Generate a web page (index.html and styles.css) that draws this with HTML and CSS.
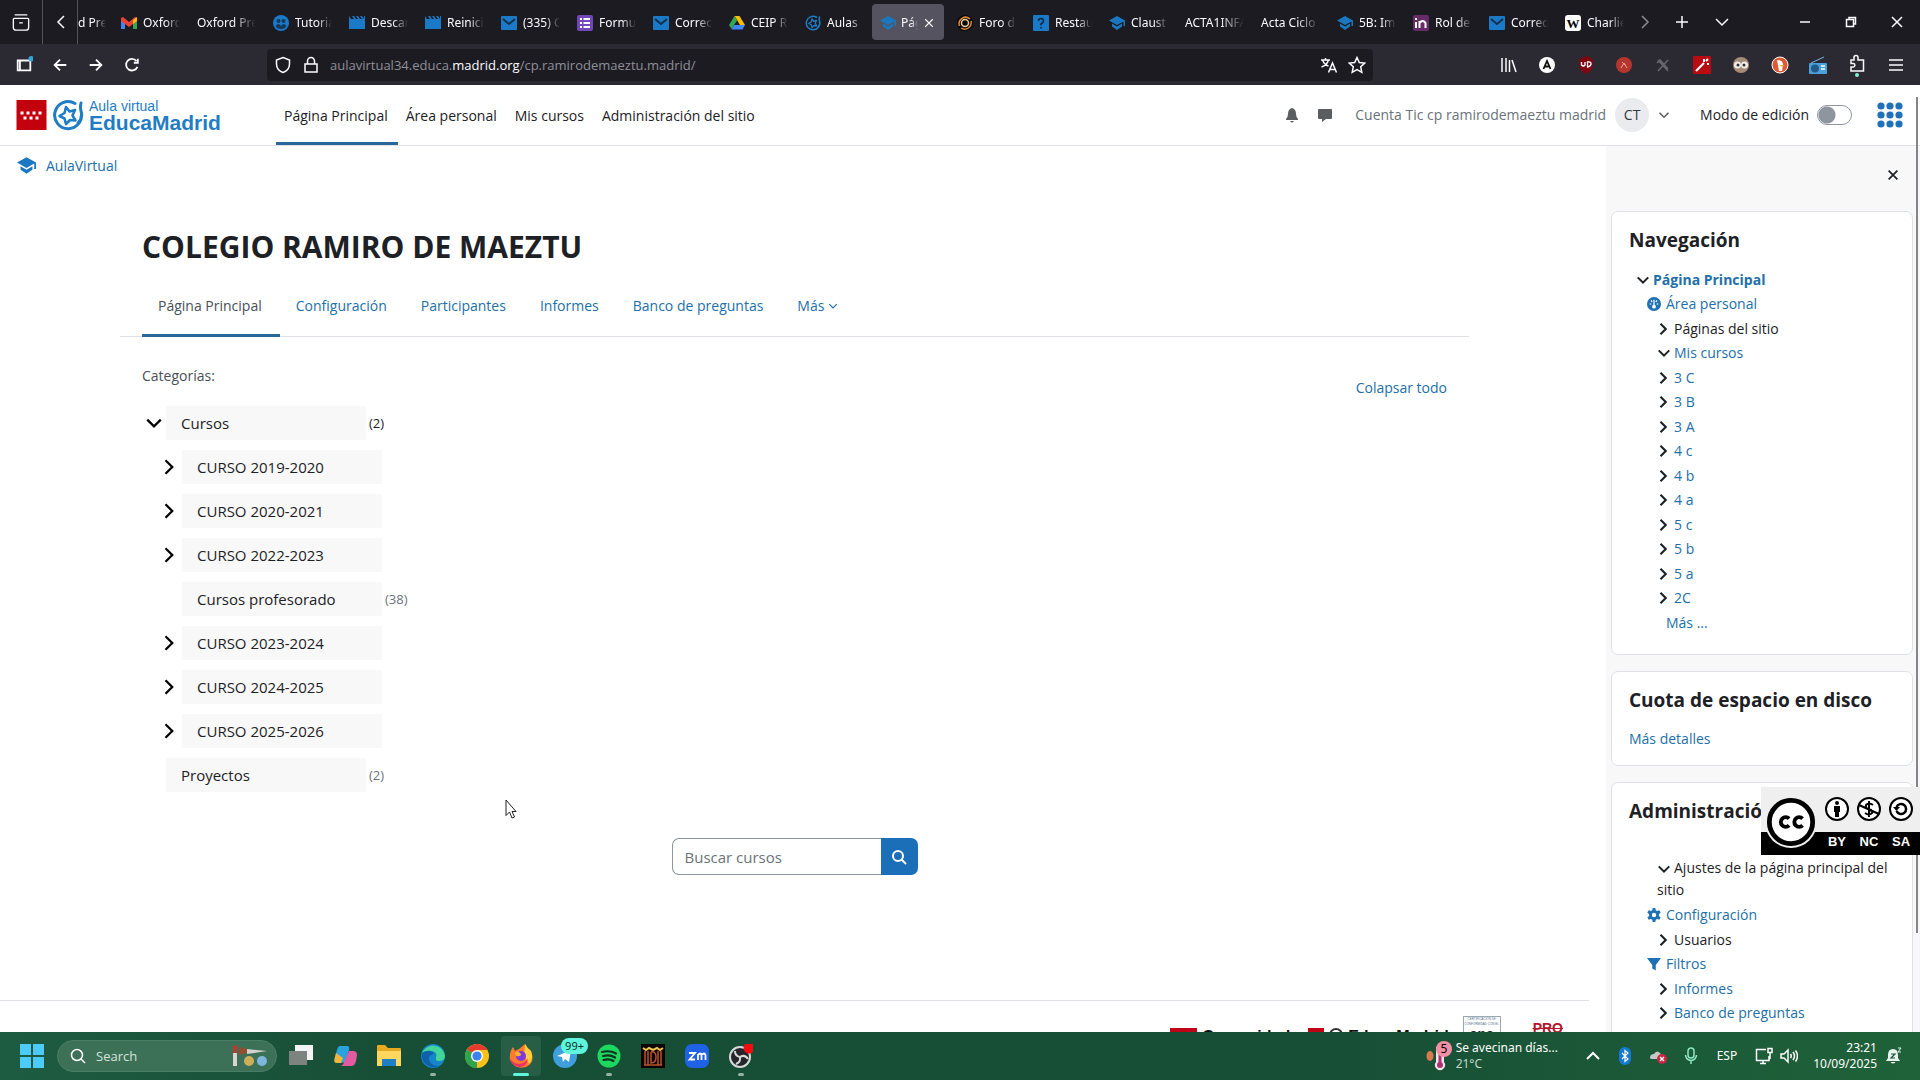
FILE: index.html
```html
<!DOCTYPE html>
<html lang="es">
  <head>
    <meta charset="UTF-8" />
    <meta name="viewport" content="width=device-width, initial-scale=1.0" />
    <title>Página Principal | AulaVirtual</title>
    <link rel="stylesheet" href="styles.css">
  </head>
  <body>
    <!-- shared icons -->
    <svg class="defs" aria-hidden="true">
      <symbol id="i-down" viewBox="0 0 16 16"><path d="M2 5l6 6 6-6" /></symbol>
      <symbol id="i-right" viewBox="0 0 16 16"><path d="M4 2l6 6-6 6" /></symbol>
      <symbol id="i-x" viewBox="0 0 16 16"><path d="M3 3l10 10M13 3L3 13" /></symbol>
      <symbol id="i-mail" viewBox="0 0 16 16"><rect y="1" width="16" height="14" rx="1" fill="#1b7ac8" /><path d="M2 4l6 5 6-5" fill="none" stroke="#12304d" stroke-width="2" /></symbol>
      <symbol id="i-clap" viewBox="0 0 16 16"><path d="M0 1l2 3h3L3 1h2l2 3h2L7 1h2l2 3h2l-2-3h2l2 3V1h1v13H0z" fill="#1b7ac8" /></symbol>
      <symbol id="i-cap" viewBox="0 0 16 16"><path d="M8 1L0 5.5 8 10l6.5-3.6V11H16V5.500z" fill="#1b78c0" /><path d="M3 8.600v3L8 15l5-3.400v-3L8 11.500z" fill="#1b78c0" /></symbol>
      <symbol id="i-star" viewBox="0 0 32 32"><path d="M23 4.500A13.500 13.500 0 1 0 29 12Q28 8 29 4M29 12q2 7-3 12" fill="none" stroke="#1f7dc6" stroke-width="3" stroke-linecap="round" /><path d="M14 8l3.500 4.500 5.500-1.500-2.500 5.500 3 5-5.500-.5-4 4-1.500-5.500-5-2.500 5-3z" fill="none" stroke="#1f7dc6" stroke-width="2.600" stroke-linejoin="round" /></symbol>
    </svg>

    <div class="tabstrip">
      <button class="icon-btn firefox-view" aria-label="Firefox View"><svg viewBox="0 0 20 20" class="line"><path d="M3 2h14M2.500 6h15a1 1 0 0 1 1 1v9a3 3 0 0 1-3 3h-11a3 3 0 0 1-3-3V7a1 1 0 0 1 1-1zM8 11h4" /></svg></button>
      <button class="icon-btn scroll-left" aria-label="Anterior"><svg viewBox="0 0 16 16" class="line"><path d="M12 2L6 8l6 6" /></svg></button>
      <div class="tabs">
        <div class="tab partial"><span>d Pre</span></div>
        <div class="tab"><svg viewBox="0 0 16 16"><path d="M0 3v11h4V8z" fill="#4285f4" /><path d="M16 3v11h-4V8z" fill="#34a853" /><path d="M0 3l2-1 6 5 6-5 2 1v3l-8 6-8-6z" fill="#ea4335" /><path d="M12 5l4-3v4l-4 3z" fill="#fbbc04" /></svg><span>Oxford</span></div>
        <div class="tab"><span>Oxford Pre</span></div>
        <div class="tab"><svg viewBox="0 0 16 16"><circle cx="8" cy="8" r="8" fill="#1b7ac8" /><circle cx="5.500" cy="6" r="2" fill="#13385c" /><circle cx="10.500" cy="6" r="2" fill="#13385c" /><path d="M2.500 11q3-4 5.500 0v3q-4 0-5.500-3zM13.500 11q-3-4-5.500 0v3q4 0 5.500-3z" fill="#13385c" /></svg><span>Tutoria</span></div>
        <div class="tab"><svg><use href="#i-clap" /></svg><span>Descar</span></div>
        <div class="tab"><svg><use href="#i-clap" /></svg><span>Reinici</span></div>
        <div class="tab"><svg><use href="#i-mail" /></svg><span>(335) C</span></div>
        <div class="tab"><svg viewBox="0 0 16 16"><rect width="16" height="16" rx="2" fill="#7248b9" /><path d="M3 4h2M3 8h2M3 12h2M6.500 4H13M6.500 8H13M6.500 12H13" stroke="#fff" stroke-width="2" /></svg><span>Formul</span></div>
        <div class="tab"><svg><use href="#i-mail" /></svg><span>Correo</span></div>
        <div class="tab"><svg viewBox="0 0 16 16"><path d="M5.500 1h5l5.500 9h-5z" fill="#fbbc04" /><path d="M5.500 1L0 10l2.500 4L8 5.500z" fill="#34a853" /><path d="M5 10h11l-2.500 4.500h-11z" fill="#4285f4" /></svg><span>CEIP R</span></div>
        <div class="tab"><svg><use href="#i-star" /></svg><span>Aulas</span></div>
        <div class="tab active"><svg><use href="#i-cap" /></svg><span>Pág</span><button class="close" aria-label="Cerrar"><svg class="line"><use href="#i-x" /></svg></button></div>
        <div class="tab"><svg viewBox="0 0 16 16"><circle cx="8" cy="8" r="8" fill="#080808" /><g fill="none" stroke="#d98a3c" stroke-width="1.500"><path d="M2.500 11A6.500 6.500 0 0 1 13 4M14 6a6.500 6.500 0 0 1-10 7" /><circle cx="8" cy="8" r="3.500" stroke="#e8c9a0" /></g></svg><span>Foro d</span></div>
        <div class="tab"><svg viewBox="0 0 16 16"><rect width="16" height="16" rx="1" fill="#1b7ac8" /><path d="M5.500 6Q5.500 3.500 8 3.500T10.500 6Q10.500 7.500 8 9v1.500M8 12v1.500" fill="none" stroke="#102a44" stroke-width="1.600" /></svg><span>Restau</span></div>
        <div class="tab"><svg><use href="#i-cap" /></svg><span>Claust</span></div>
        <div class="tab"><span>ACTA1INFA</span></div>
        <div class="tab"><span>Acta Ciclo</span></div>
        <div class="tab"><svg><use href="#i-cap" /></svg><span>5B: Im</span></div>
        <div class="tab"><svg viewBox="0 0 16 16"><rect width="16" height="16" rx="2" fill="#652d68" /><path d="M3 7v6M3 3v2M6.500 13V6M6.500 8q3.500-4 6 0v5" fill="none" stroke="#fff" stroke-width="2" /></svg><span>Rol de</span></div>
        <div class="tab"><svg><use href="#i-mail" /></svg><span>Correo</span></div>
        <div class="tab"><svg viewBox="0 0 16 16"><rect width="16" height="16" rx="3" fill="#fff" /><text x="8" y="13" text-anchor="middle" class="wiki">W</text></svg><span>Charlie</span></div>
      </div>
      <button class="icon-btn dim" aria-label="Siguiente"><svg viewBox="0 0 16 16" class="line"><path d="M5 2l6 6-6 6" /></svg></button>
      <button class="icon-btn" aria-label="Nueva pestaña"><svg viewBox="0 0 16 16" class="line"><path d="M8 2v12M2 8h12" /></svg></button>
      <button class="icon-btn" aria-label="Listar pestañas"><svg viewBox="0 0 16 16" class="line"><path d="M2 5l6 6 6-6" /></svg></button>
      <div class="win-buttons">
        <button class="icon-btn" aria-label="Minimizar"><svg viewBox="0 0 16 16" class="line"><path d="M3 8h10" /></svg></button>
        <button class="icon-btn" aria-label="Restaurar"><svg viewBox="0 0 16 16" class="line"><path d="M3.500 5.500h7v7h-7zM6 5.500v-2h6.500V10h-2" /></svg></button>
        <button class="icon-btn" aria-label="Cerrar ventana"><svg viewBox="0 0 16 16" class="line"><path d="M3 3l10 10M13 3L3 13" /></svg></button>
      </div>
    </div>

    <div class="toolbar">
      <div class="nav-buttons">
        <button class="icon-btn" aria-label="Barra lateral"><svg viewBox="0 0 20 20" class="line thick"><path d="M3 5h14v11H3zM5.500 5v11" /><circle cx="18" cy="3" r="3" fill="#2ea8dc" stroke="none" /></svg></button>
        <button class="icon-btn" aria-label="Atrás"><svg viewBox="0 0 20 20" class="line thick"><path d="M17 10H4M10 4l-6 6 6 6" /></svg></button>
        <button class="icon-btn" aria-label="Adelante"><svg viewBox="0 0 20 20" class="line thick"><path d="M3 10h13M10 4l6 6-6 6" /></svg></button>
        <button class="icon-btn" aria-label="Recargar"><svg viewBox="0 0 20 20" class="line thick"><path d="M16 12a6.500 6.500 0 1 1-1-6.500M16.500 3v4.500H12" /></svg></button>
      </div>
      <div class="urlbar">
        <svg viewBox="0 0 18 18" class="line"><path d="M9 1.500l6.500 2.500v4Q15.500 14 9 16.500 2.500 14 2.500 8V4z" /></svg>
        <svg viewBox="0 0 18 18" class="line"><path d="M3 8h12v8H3zM5.500 8V5a3.500 3.500 0 0 1 7 0v3" /></svg>
        <div class="url" role="textbox" aria-label="Dirección">aulavirtual34.educa.<b>madrid.org</b>/cp.ramirodemaeztu.madrid/</div>
        <svg viewBox="0 0 18 18" class="line"><path d="M1 4h9M5.500 2v2M2.500 4q2 5 6 6M8.500 4q-1.500 5-7 7M8.500 16.500L12.500 7l4 9.500M10 13.500h5" /></svg>
        <svg viewBox="0 0 18 18" class="line"><path d="M9 1.500l2.300 5 5.400.6-4 3.700 1.100 5.500L9 13.600l-4.800 2.700 1.100-5.500-4-3.700 5.400-.6z" /></svg>
      </div>
      <div class="extensions">
        <svg viewBox="0 0 18 18" class="line"><path d="M3 2v14M7 2v14M10.500 4v12M13 4l4 12" /></svg>
        <svg viewBox="0 0 18 18"><circle cx="9" cy="9" r="8" fill="#fff" /><path d="M5.500 13L9 5l3.500 8M7 10.500h4" fill="none" stroke="#111" stroke-width="1.800" /></svg>
        <svg viewBox="0 0 18 18"><path d="M9 0l7 3v6q0 6-7 9-7-3-7-9V3z" fill="#7d0612" /><path d="M4.500 6v3q2 2 3.500 0V6M10.500 6v5q4-1 3.500-4-1-1.500-3.500-1z" fill="none" stroke="#fff" stroke-width="1.300" /></svg>
        <svg viewBox="0 0 18 18"><circle cx="9" cy="9" r="8" fill="#b5362e" /><path d="M6 12l3-5 3 5M7 6l4 4" fill="none" stroke="#eda79b" /></svg>
        <svg viewBox="0 0 18 18"><path d="M4 4l10 11M14 4L4 15M3 7l3-3 8 9" fill="none" stroke="#66656d" stroke-width="1.600" /></svg>
        <svg viewBox="0 0 18 18"><rect width="18" height="18" rx="1" fill="#b90c12" /><path d="M3 15l8-8M11 3v3M15 3l-2 2M14 8h2" stroke="#fff" stroke-width="2" /></svg>
        <svg viewBox="0 0 18 18"><circle cx="9" cy="9" r="8" fill="#a58b78" /><circle cx="5.500" cy="9" r="3.500" fill="#f0eee8" /><circle cx="12.500" cy="9" r="3.500" fill="#f0eee8" /><circle cx="6" cy="9" r="1.500" fill="#333" /><circle cx="12" cy="9" r="1.500" fill="#333" /></svg>
        <svg viewBox="0 0 18 18"><circle cx="9" cy="9" r="8" fill="#de5833" stroke="#fff" /><path d="M6 4q6 0 6 5l-1 6H8z" fill="#fff" /><path d="M9 9h5l-3 2z" fill="#f5b21c" /></svg>
        <svg viewBox="0 0 18 18"><path d="M2 7L15 1" stroke="#77b6e4" /><rect y="7" width="18" height="11" rx="1" fill="#4ba0da" /><circle cx="6" cy="12.500" r="4" fill="#225b87" /><path d="M12 10h4M12 13h4" stroke="#cde7f9" stroke-width="2" /></svg>
        <svg viewBox="0 0 18 24" class="line tall"><path d="M3 7h3V4.500a2 2 0 0 1 4 0V7h5.500v11H3v-4h2.500a1.800 1.800 0 0 0 0-3.500H3z" /><circle cx="9" cy="22" r="2" fill="#7ff0d8" stroke="none" /></svg>
        <svg viewBox="0 0 18 18" class="line"><path d="M2 4h14M2 9h14M2 14h14" /></svg>
      </div>
    </div>

    <div class="page">
      <header class="site-header">
        <a href="#" class="brand">
          <svg class="flag" viewBox="0 0 30 30"><rect width="30" height="30" fill="#c3000d" /><path d="M4 13h3M10 13h3M16 13h3M22 13h3M7 18h3M13 18h3M19 18h3" stroke="#fff" stroke-width="3" /></svg>
          <svg class="star"><use href="#i-star" /></svg>
          <span class="brand-text">Aula virtual<strong>EducaMadrid</strong></span>
        </a>
        <nav class="primary">
          <a href="#" class="current">Página Principal</a>
          <a href="#">Área personal</a>
          <a href="#">Mis cursos</a>
          <a href="#">Administración del sitio</a>
        </nav>
        <div class="user">
          <button class="plain" aria-label="Notificaciones"><svg viewBox="0 0 16 16"><path d="M8 1q4 1 4 6 0 3 2 5v1H2v-1q2-2 2-5 0-5 4-6zM6 14h4q-2 3-4 0z" /></svg></button>
          <button class="plain" aria-label="Mensajes"><svg viewBox="0 0 16 16"><path d="M2 2h12a1 1 0 0 1 1 1v8a1 1 0 0 1-1 1H9l-4 3v-3H2a1 1 0 0 1-1-1V3a1 1 0 0 1 1-1z" /></svg></button>
          <span class="user-name">Cuenta Tic cp ramirodemaeztu madrid</span>
          <span class="avatar">CT</span>
          <button class="plain caret" aria-label="Menú de usuario"><svg class="line"><use href="#i-down" /></svg></button>
        </div>
        <div class="edit-mode">
          <label for="edit">Modo de edición</label>
          <input type="checkbox" id="edit">
        </div>
        <button class="plain apps" aria-label="Aplicaciones"><svg viewBox="0 0 26 26"><g fill="#1f72b8"><circle cx="4" cy="4" r="3.600" /><circle cx="13" cy="4" r="3.600" /><circle cx="22" cy="4" r="3.600" /><circle cx="4" cy="13" r="3.600" /><circle cx="13" cy="13" r="3.600" /><circle cx="22" cy="13" r="3.600" /><circle cx="4" cy="22" r="3.600" /><circle cx="13" cy="22" r="3.600" /><circle cx="22" cy="22" r="3.600" /></g></svg></button>
      </header>

      <div class="columns">
        <div class="main">
          <div class="breadcrumb"><svg><use href="#i-cap" /></svg><a href="#">AulaVirtual</a></div>
          <main>
            <h1>COLEGIO RAMIRO DE MAEZTU</h1>
            <nav class="secondary">
              <a href="#" class="current">Página Principal</a>
              <a href="#">Configuración</a>
              <a href="#">Participantes</a>
              <a href="#">Informes</a>
              <a href="#">Banco de preguntas</a>
              <a href="#">Más <svg class="line"><use href="#i-down" /></svg></a>
            </nav>
            <section class="categories">
              <div class="cat-head">
                <span>Categorías:</span>
                <a href="#">Colapsar todo</a>
              </div>
              <ul class="cats">
                <li><div class="cat"><svg class="line"><use href="#i-down" /></svg><a href="#">Cursos</a><span class="dark">(2)</span></div>
                  <ul>
                    <li><div class="cat"><svg class="line"><use href="#i-right" /></svg><a href="#">CURSO 2019-2020</a></div></li>
                    <li><div class="cat"><svg class="line"><use href="#i-right" /></svg><a href="#">CURSO 2020-2021</a></div></li>
                    <li><div class="cat"><svg class="line"><use href="#i-right" /></svg><a href="#">CURSO 2022-2023</a></div></li>
                    <li><div class="cat"><a href="#">Cursos profesorado</a><span>(38)</span></div></li>
                    <li><div class="cat"><svg class="line"><use href="#i-right" /></svg><a href="#">CURSO 2023-2024</a></div></li>
                    <li><div class="cat"><svg class="line"><use href="#i-right" /></svg><a href="#">CURSO 2024-2025</a></div></li>
                    <li><div class="cat"><svg class="line"><use href="#i-right" /></svg><a href="#">CURSO 2025-2026</a></div></li>
                  </ul>
                </li>
                <li><div class="cat"><a href="#">Proyectos</a><span>(2)</span></div></li>
              </ul>
            </section>
            <form class="search">
              <input type="text" placeholder="Buscar cursos" aria-label="Buscar cursos">
              <button type="button" aria-label="Buscar"><svg viewBox="0 0 16 16" class="line"><circle cx="7" cy="7" r="5" /><path d="M10.500 10.500L15 15" /></svg></button>
            </form>
          </main>
          <footer>
            <div class="foot-logo comunidad"><i></i><b>Comunidad</b></div>
            <div class="foot-logo educa"><i></i><svg viewBox="0 0 14 14"><circle cx="7" cy="7" r="6" fill="none" stroke="#333" stroke-width="2" /><path d="M7 4v6M4 7h6" stroke="#333" /></svg><b>EducaMadrid</b></div>
            <div class="cert"><small>CERTIFICACIÓN DE CONFORMIDAD CON EL</small><b>ens</b></div>
            <div class="pro">PRO</div>
          </footer>
        </div>

        <aside>
          <button class="plain drawer-close" aria-label="Cerrar bloques"><svg class="line"><use href="#i-x" /></svg></button>
          <section class="card">
            <h2>Navegación</h2>
            <ul class="tree">
              <li class="root"><svg class="line"><use href="#i-down" /></svg><a href="#">Página Principal</a></li>
              <li class="leaf"><svg viewBox="0 0 16 16"><circle cx="8" cy="8" r="8" fill="#1f70b4" /><path d="M8 3v7M3 8h2M11 8h2M4.500 4l1.500 1.500M11.500 4L10 5.500" stroke="#fff" stroke-width="1.400" /><circle cx="8" cy="11" r="2.200" fill="#fff" /></svg><a href="#">Área personal</a></li>
              <li><svg class="line"><use href="#i-right" /></svg><span>Páginas del sitio</span></li>
              <li><svg class="line"><use href="#i-down" /></svg><a href="#">Mis cursos</a></li>
              <li><svg class="line"><use href="#i-right" /></svg><a href="#">3 C</a></li>
              <li><svg class="line"><use href="#i-right" /></svg><a href="#">3 B</a></li>
              <li><svg class="line"><use href="#i-right" /></svg><a href="#">3 A</a></li>
              <li><svg class="line"><use href="#i-right" /></svg><a href="#">4 c</a></li>
              <li><svg class="line"><use href="#i-right" /></svg><a href="#">4 b</a></li>
              <li><svg class="line"><use href="#i-right" /></svg><a href="#">4 a</a></li>
              <li><svg class="line"><use href="#i-right" /></svg><a href="#">5 c</a></li>
              <li><svg class="line"><use href="#i-right" /></svg><a href="#">5 b</a></li>
              <li><svg class="line"><use href="#i-right" /></svg><a href="#">5 a</a></li>
              <li><svg class="line"><use href="#i-right" /></svg><a href="#">2C</a></li>
              <li class="more"><a href="#">Más ...</a></li>
            </ul>
          </section>
          <section class="card">
            <h2>Cuota de espacio en disco</h2>
            <a href="#">Más detalles</a>
          </section>
          <section class="card admin">
            <h2>Administración</h2>
            <ul class="tree">
              <li class="wrap"><svg class="line"><use href="#i-down" /></svg><span>Ajustes de la página principal del sitio</span></li>
              <li class="leaf"><svg viewBox="0 0 16 16"><path d="M6.500 0h3l.5 2.500 1.500.8L14 2.500l1.600 2.600-2 1.900v2l2 1.900-1.600 2.600-2.500-.8-1.500.8-.5 2.500h-3L6 13.500l-1.500-.8-2.500.8-1.600-2.600 2-1.900V7l-2-1.900L2 2.500l2.500.8L6 2.500z" fill="#1f70b4" /><circle cx="8" cy="8" r="2.500" fill="#fff" /></svg><a href="#">Configuración</a></li>
              <li><svg class="line"><use href="#i-right" /></svg><span>Usuarios</span></li>
              <li class="leaf"><svg viewBox="0 0 16 16"><path d="M0 1h16l-6 8v6.500L6 13V9z" fill="#1f70b4" /></svg><a href="#">Filtros</a></li>
              <li><svg class="line"><use href="#i-right" /></svg><a href="#">Informes</a></li>
              <li><svg class="line"><use href="#i-right" /></svg><a href="#">Banco de preguntas</a></li>
            </ul>
          </section>
        </aside>
      </div>
      <div class="scroll-thumb"></div>
      <div class="cc-badge">
        <svg class="cc" viewBox="0 0 54 54"><circle cx="27" cy="27" r="27" fill="#efefef" /><circle cx="27" cy="27" r="22.500" fill="#fff" stroke="#000" stroke-width="5" /><path d="M25 23.500a5 5 0 1 0 0 7M39 23.500a5 5 0 1 0 0 7" fill="none" stroke="#000" stroke-width="4" /></svg>
        <div class="cc-term"><svg viewBox="0 0 24 24"><circle cx="12" cy="12" r="11" fill="#fff" stroke="#000" stroke-width="2" /><circle cx="12" cy="6" r="2" /><path d="M9 9h6v6h-1v5h-4v-5H9z" /></svg>BY</div>
        <div class="cc-term"><svg viewBox="0 0 24 24"><circle cx="12" cy="12" r="11" fill="#fff" stroke="#000" stroke-width="2" /><path d="M16 8q-4-3-7 0-1 3 3 4t3 4q-3 3-7 0M12 4v16M2 8l20 9" fill="none" stroke="#000" stroke-width="2" /></svg>NC</div>
        <div class="cc-term"><svg viewBox="0 0 24 24"><circle cx="12" cy="12" r="11" fill="#fff" stroke="#000" stroke-width="2" /><path d="M7.500 10a5 5 0 1 1 0 4" fill="none" stroke="#000" stroke-width="2.500" /><path d="M4 10h7l-3.500 4z" /></svg>SA</div>
      </div>
    </div>

    <div class="taskbar">
      <button class="start" aria-label="Inicio"><svg viewBox="0 0 24 24"><path d="M0 0h11v11H0zM13 0h11v11H13zM0 13h11v11H0zM13 13h11v11H13z" fill="#4ccaf8" /></svg></button>
      <div class="win-search">
        <svg viewBox="0 0 16 16" class="line"><circle cx="7" cy="7" r="5.500" /><path d="M11 11l4 4" /></svg>
        <input type="text" placeholder="Search" aria-label="Search">
        <svg class="art" viewBox="0 0 36 24"><path d="M2 8h4v14H2z" fill="#d9d4cd" /><path d="M2 2l4-1v8H2z" fill="#b73a35" /><path d="M8 3l8 2v4l-8 2z" fill="#93502c" /><path d="M16 5l20 2-20 3z" fill="#cfd2cf" /><circle cx="18" cy="17" r="5" fill="#cfae5a" /><circle cx="31" cy="17" r="5" fill="#7fb7dc" /></svg>
      </div>
      <div class="apps-row">
        <button aria-label="Vista de tareas"><svg viewBox="0 0 24 24"><path d="M6 1h18v15H6z" fill="#f2f4f3" /><path d="M0 7h18v14H0z" fill="#7d8480" /></svg></button>
        <button aria-label="Copilot"><svg viewBox="0 0 24 24"><path d="M7 2h7q3 0 2 4l-3 9q-1 4-5 4H4q-4 0-2-6l2-7q1-4 3-4z" fill="#29a3e0" /><path d="M3 9l7 5-2 5H4q-4 0-2-6z" fill="#f0b53a" /><path d="M12 22h6q4 0 5-5l1-6q0-4-4-4h-4l-5 11q-1 4-4 4z" fill="#e25aa0" /></svg></button>
        <button aria-label="Explorador"><svg viewBox="0 0 24 24"><path d="M0 2q0-1 1-1h7l3 3h12q1 0 1 1v17H0z" fill="#e8a820" /><path d="M0 7h24v15H0z" fill="#ffd75e" /><path d="M5 22v-7h14v7z" fill="#1f7fc4" /></svg></button>
        <button class="open" aria-label="Edge"><svg viewBox="0 0 24 24"><circle cx="12" cy="12" r="12" fill="#1686c8" /><path d="M1 9a12 12 0 0 1 23 3q0 5-6 5-4 0-3-3 2-6-4-7-6-1-10 2z" fill="#42d69a" /><path d="M1 9q8-5 12 1-6 1-5 6 2 6 10 6a12 12 0 0 1-17-13z" fill="#0e62ac" /></svg></button>
        <button aria-label="Chrome"><svg viewBox="0 0 24 24"><circle cx="12" cy="12" r="12" fill="#fbc116" /><path d="M12 12L2 5.500a12 12 0 0 1 20.500.5H12z" fill="#e33b2e" /><path d="M12 12v12A12 12 0 0 1 2 5.500z" fill="#2da44e" /><circle cx="12" cy="12" r="6" fill="#fff" /><circle cx="12" cy="12" r="4.600" fill="#3b82ee" /></svg></button>
        <button class="open selected" aria-label="Firefox"><svg viewBox="0 0 24 24"><path d="M16 0q2 4 6 7 5 11-5 16-11 3-16-7-1-8 3-13l2 4 4-2z" fill="#ff7a2c" /><path d="M16 0q2 4 6 7 3 8-2 13l-5-9z" fill="#ffce3a" /><path d="M1 14q3 6 10 6 6-1 8-6-1 9-9 9-8-2-9-9z" fill="#e9306a" /><circle cx="12" cy="12" r="5" fill="#7c3ae0" /><path d="M6 9q3-3 6 1 0 3-5 2z" fill="#ffb02e" /></svg></button>
        <button class="badged" aria-label="Telegram"><svg viewBox="0 0 24 24"><circle cx="12" cy="12" r="12" fill="#3f9fdd" /><path d="M4 12l14-6-2 12-4-3-2 3-1-5z" fill="#fff" /></svg><span class="badge">99+</span></button>
        <button class="open" aria-label="Spotify"><svg viewBox="0 0 24 24"><circle cx="12" cy="12" r="11.500" fill="#1ed760" /><path d="M5 8q8-2 14 1.500M6 12q7-2 12 1.500M6.500 16q6-1.500 10 1" fill="none" stroke="#10331d" stroke-width="2.200" stroke-linecap="round" /></svg></button>
        <button aria-label="Diablo"><svg viewBox="0 0 24 24"><path d="M0 0h24v24H0z" fill="#0a0503" /><path d="M2 4l3 2 3-2 4 2 4-2 3 2 3-2" fill="none" stroke="#f0c24a" stroke-width="2" /><path d="M4 7v14M7 7v14M17 7v14M20 7v14M10 8v11q5 0 5-6t-5-5M3 21h18" fill="none" stroke="#b9522a" stroke-width="1.500" /></svg></button>
        <button aria-label="Zoom"><svg viewBox="0 0 24 24"><rect width="24" height="24" rx="7" fill="#1f62e6" /><path d="M4 9h6l-5.500 6.500H10M13 16v-6M13 11q3-3 3.500 0v5M16.500 11q3-3 4 0v5" fill="none" stroke="#fff" stroke-width="1.800" /></svg></button>
        <button class="open" aria-label="OBS"><svg viewBox="0 0 24 24"><circle cx="11" cy="13" r="10" fill="#26262a" stroke="#d8dad9" stroke-width="2" /><path d="M11 13q-5-1-5-6M11 13q5-3 8 2M11 13q1 5-4 7" fill="none" stroke="#d8dad9" stroke-width="2" /><circle cx="20" cy="4" r="5.500" fill="#f30b10" /></svg></button>
      </div>
      <div class="weather">
        <svg viewBox="0 0 26 30"><ellipse cx="4" cy="15" rx="3.500" ry="5" fill="#d97b50" /><path d="M10 6h8v15a5 5 0 1 1-8 0z" fill="#efe6ea" /><path d="M14 8v16" stroke="#b0306f" stroke-width="3" /><circle cx="14" cy="24" r="3" fill="#b0306f" /><circle cx="18" cy="8" r="8" fill="#f08fa5" /><text x="18" y="12" text-anchor="middle" class="five">5</text></svg>
        <p>Se avecinan días...<br><span>21°C</span></p>
      </div>
      <div class="tray">
        <svg viewBox="0 0 18 18" class="line thick"><path d="M4 12l6-6 6 6" /></svg>
        <svg viewBox="0 0 18 18"><rect x="3" width="12" height="18" rx="6" fill="#1479d4" /><path d="M6 6l6 6-3 2.500v-11L12 6l-6 6" fill="none" stroke="#fff" stroke-width="1.200" /></svg>
        <svg viewBox="0 0 18 18"><path d="M1 11q0-4 4-4 3-5 7 0 4 1 4 5H3q-2 0-2-1z" fill="#c4c8c6" /><circle cx="13" cy="12" r="5" fill="#cb2440" /><path d="M11 10l4 4M15 10l-4 4" stroke="#fff" stroke-width="1.400" /></svg>
        <svg viewBox="0 0 18 18" class="mic"><path d="M9 1a3 3 0 0 1 3 3v4a3 3 0 0 1-6 0V4a3 3 0 0 1 3-3zM3.500 8a5.500 5.500 0 0 0 11 0M9 14v3" /></svg>
        <span class="lang">ESP</span>
        <div class="net">
          <svg viewBox="0 0 18 18" class="line"><path d="M11 2.500H1.500v11H14V9M5 16.500h6M8 13.500v3M13 1.500h4v4h-4zM15 5.500V12" /></svg>
          <svg viewBox="0 0 18 18" class="line"><path d="M1 7h3l4-4v12l-4-4H1zM10.500 7q1.500 2 0 4M13 5q3 4 0 8M15.500 3.500q4 5.500 0 11" /></svg>
        </div>
        <time>23:21<br>10/09/2025</time>
        <svg viewBox="0 0 18 18"><path d="M9 2q5 0 5 6v3l2 3H2l2-3V8q0-6 5-6zM6.500 15h5q-2.500 3-5 0z" fill="#e9f2ed" /><path d="M7 7h4l-4 4h4" fill="none" stroke="#175137" stroke-width="1.200" /><path d="M14 1h3l-3 4h3" fill="none" stroke="#e9f2ed" /></svg>
      </div>
    </div>

    <svg class="pointer" viewBox="0 0 12 20"><path d="M1 1v15.500l3.500-3.500 2.500 6 2.500-1-2.500-5.500H11z" fill="#fff" stroke="#222" /></svg>
  </body>
</html>
```

FILE: styles.css
```css
* {
  box-sizing: border-box;
}
body {
  margin: 0;
  height: 100vh;
  overflow: hidden;
  display: flex;
  flex-direction: column;
  background: #fff;
  color: #1d2125;
  font-family: "Open Sans", sans-serif;
  font-size: 14px;
  line-height: 22px;
}
a {
  color: #2270a8;
  text-decoration: none;
}
ul {
  list-style: none;
  margin: 0;
  padding: 0;
}
svg {
  width: 16px;
  height: 16px;
  flex: none;
}
.defs {
  position: absolute;
  width: 0;
  height: 0;
}
.line {
  fill: none;
  stroke: currentColor;
  stroke-width: 1.5;
}
.thick {
  stroke-width: 2;
}
button {
  border: 0;
  padding: 0;
  background: none;
  color: inherit;
  font: inherit;
  display: flex;
  align-items: center;
  justify-content: center;
  cursor: pointer;
}

/* browser */
.tabstrip {
  display: flex;
  height: 44px;
  flex: none;
  background: #1c1b22;
  color: #fbfbfe;
  font-family: "Noto Sans", sans-serif;
  font-size: 12px;
}
.icon-btn {
  width: 40px;
  height: 44px;
}
.icon-btn.dim {
  width: 34px;
  color: #8d8c93;
}
.firefox-view {
  width: 43px;
  border-right: 1px solid #55545c;
}
.firefox-view svg {
  width: 18px;
  height: 18px;
}
.scroll-left {
  width: 35px;
  border-right: 1px solid #55545c;
}
.tabs {
  display: flex;
  flex: 1;
  overflow: hidden;
}
.tab {
  display: flex;
  align-items: center;
  width: 72px;
  height: 36px;
  margin: 4px 2px;
  padding: 1px 4px 0 9px;
  gap: 6px;
  flex: none;
  border-radius: 4px;
}
.tab > span {
  flex: 1;
  min-width: 0;
  overflow: hidden;
  white-space: nowrap;
  mask-image: linear-gradient(to right, #000 60%, transparent);
}
.tab.partial {
  width: 28px;
  padding: 1px 0 0;
  margin-left: 0;
  margin-right: 4px;
}
.tab.active {
  background: #55535f;
  padding: 1px 9px 0 8px;
  gap: 5px;
}
.tab .close svg {
  width: 12px;
  height: 12px;
}
.win-buttons {
  display: flex;
  margin-left: 40px;
}
.win-buttons .icon-btn {
  width: 46px;
}
.toolbar {
  display: flex;
  align-items: center;
  height: 41px;
  flex: none;
  padding: 0 15px 0 6px;
  background: #2b2a33;
  color: #fbfbfe;
}
.nav-buttons {
  display: flex;
  width: 261px;
}
.nav-buttons .icon-btn {
  width: 36px;
  height: 40px;
}
.nav-buttons svg {
  width: 18px;
  height: 18px;
}
.urlbar {
  display: flex;
  align-items: center;
  gap: 10px;
  flex: 1;
  height: 32px;
  padding: 0 7px;
  background: #1c1b22;
  border-radius: 4px;
}
.urlbar svg,
.extensions svg {
  width: 18px;
  height: 18px;
}
.url {
  flex: 1;
  color: #8f8f98;
  font-size: 13px;
}
.url b {
  color: #fbfbfe;
  font-weight: 400;
}
.extensions {
  display: flex;
  align-items: center;
  justify-content: space-between;
  width: 406px;
  margin-left: 126px;
}
.extensions .tall {
  height: 24px;
}
.wiki {
  font: 700 13px "Liberation Serif", serif;
}

/* site header */
.page {
  position: relative;
  flex: 1;
  min-height: 0;
  display: flex;
  flex-direction: column;
  overflow: hidden;
}
.site-header {
  display: flex;
  align-items: center;
  height: 61px;
  flex: none;
  padding: 0 17px 0 16px;
  border-bottom: 1px solid #dee2e6;
}
.brand {
  display: flex;
  align-items: center;
  width: 260px;
  gap: 5px;
  color: #1f7dc6;
}
.brand .flag {
  width: 31px;
  height: 30px;
}
.brand .star {
  width: 32px;
  height: 32px;
}
.brand-text {
  font: 14px/16px "Liberation Sans", sans-serif;
}
.brand-text strong {
  display: block;
  font-size: 21px;
  line-height: 18px;
}
.primary {
  display: flex;
  align-self: stretch;
  flex: 1;
}
.primary a {
  display: flex;
  align-items: center;
  padding: 5px 10px 0 8px;
  color: #1d2125;
  border-bottom: 3px solid transparent;
}
.primary .current,
.secondary .current {
  border-bottom-color: #2a689c;
}
.plain {
  color: #5b5d60;
}
.plain svg {
  fill: currentColor;
}
.plain .line {
  fill: none;
  stroke-width: 2;
}
.user {
  display: flex;
  align-items: center;
  gap: 17px;
  color: #6a737b;
}
.user-name {
  margin-left: 5px;
}
.avatar {
  width: 34px;
  height: 34px;
  margin: 0 -8px;
  border-radius: 50%;
  background: #e9ebee;
  color: #343a40;
  line-height: 34px;
  text-align: center;
}
.caret svg {
  width: 12px;
  height: 12px;
}
.edit-mode {
  display: flex;
  align-items: center;
  gap: 8px;
  margin: 0 25px 0 30px;
}
.edit-mode input {
  appearance: none;
  width: 35px;
  height: 20px;
  margin: 0;
  border: 1px solid #8f959e;
  border-radius: 10px;
  background: radial-gradient(circle at 9px 9px, #8f959e 8px, transparent 9px);
}
.apps svg {
  width: 26px;
  height: 26px;
}

/* content */
.columns {
  display: flex;
  flex: 1;
  min-height: 0;
}
.main {
  flex: 1;
  display: flex;
  flex-direction: column;
  margin-right: 17px;
}
.breadcrumb {
  display: flex;
  align-items: center;
  gap: 10px;
  height: 39px;
  padding-left: 17px;
}
.breadcrumb svg {
  width: 19px;
  height: 19px;
}
main {
  margin: 0 120px;
}
h1 {
  margin: 43px 22px 10px;
  font-size: 30px;
  line-height: 38px;
}
.secondary {
  display: flex;
  height: 61px;
  padding: 0 22px;
  border-bottom: 1px solid #dee2e6;
}
.secondary a {
  display: flex;
  align-items: center;
  gap: 4px;
  height: 61px;
  padding: 2px 18px 0 16px;
  border-bottom: 3px solid transparent;
}
.secondary svg {
  width: 10px;
  height: 10px;
  stroke-width: 2;
}
.secondary .current {
  color: #495057;
}
.categories {
  padding: 28px 22px 0;
}
.cat-head {
  display: flex;
  justify-content: space-between;
  height: 41px;
  color: #495057;
}
.cat-head a {
  margin-top: 12px;
}
.cats {
  font-size: 15px;
}
.cats ul {
  padding-left: 16px;
}
.cat {
  display: flex;
  align-items: center;
  height: 34px;
  margin-bottom: 10px;
}
.cat svg {
  width: 18px;
  height: 18px;
  margin: 0 3px;
  color: #000;
  stroke-width: 2;
}
.cat a {
  width: 200px;
  padding: 6px 16px 6px 15px;
  background: #f8f8f9;
  color: #1d2125;
}
.cat a:first-child {
  margin-left: 24px;
}
.cat span {
  margin-left: 3px;
  color: #6a737b;
  font-size: 13px;
}
.cat .dark {
  color: #1d2125;
}
.search {
  display: flex;
  justify-content: center;
  margin-top: 46px;
}
.search input {
  width: 209px;
  height: 37px;
  padding: 0 12px;
  border: 1px solid #8f959e;
  border-right: 0;
  border-radius: 7px 0 0 7px;
  font: 15px "Open Sans", sans-serif;
}
.search input::placeholder {
  color: #6a737b;
}
.search button {
  width: 37px;
  border-radius: 0 7px 7px 0;
  background: #1a6fb8;
  color: #fff;
}
.search button svg {
  stroke-width: 2;
}
footer {
  display: flex;
  justify-content: flex-end;
  height: 32px;
  margin-top: auto;
  padding: 15px 26px 0 0;
  border-top: 1px solid #dee2e6;
  overflow: hidden;
}
.foot-logo {
  display: flex;
  gap: 5px;
  padding-top: 12px;
  font: 16px/18px "Liberation Sans", sans-serif;
  color: #111;
}
.foot-logo i {
  width: 16px;
  height: 16px;
  background: #c00418;
}
.foot-logo svg {
  width: 14px;
  height: 14px;
}
.comunidad {
  margin-right: 18px;
}
.comunidad i {
  width: 27px;
}
.educa {
  margin-right: 14px;
}
.cert {
  width: 38px;
  height: 40px;
  margin-right: 32px;
  border: 1px solid #9aa7b5;
  text-align: center;
  font: 14px/12px "Liberation Sans", sans-serif;
}
.cert small {
  display: block;
  height: 11px;
  overflow: hidden;
  color: #53708c;
  font-size: 3px;
  line-height: 5px;
}
.pro {
  margin-top: 3px;
  color: #b5162c;
  font: 700 14px/18px "Liberation Sans", sans-serif;
  text-decoration: line-through;
}

/* blocks drawer */
aside {
  width: 314px;
  padding: 0 7px 0 5px;
  background: #f8f8f9;
  overflow: hidden;
}
.drawer-close {
  width: 20px;
  height: 20px;
  margin: 19px 10px 26px auto;
  color: #1d2125;
}
.drawer-close svg {
  width: 14px;
  height: 14px;
}
.card {
  margin-bottom: 16px;
  padding: 14px 17px 15px;
  background: #fff;
  border: 1px solid #dee2e6;
  border-radius: 7px;
}
.card h2 {
  margin: 0 0 13px;
  font-size: 19px;
  line-height: 28px;
}
.card > a {
  display: block;
  margin-top: 14px;
}
.tree {
  margin-bottom: 4px;
}
.tree li {
  display: flex;
  align-items: center;
  min-height: 24px;
  padding-left: 28px;
}
.tree li:nth-child(odd) {
  min-height: 25px;
}
.tree svg {
  width: 14px;
  height: 14px;
  margin-right: 3px;
}
.tree .line {
  stroke-width: 2.4;
}
.tree .root {
  padding-left: 7px;
  font-weight: 700;
}
.tree .leaf {
  padding-left: 18px;
}
.tree .leaf svg {
  margin-right: 5px;
}
.tree .more {
  padding-left: 37px;
}
.card.admin h2 {
  margin-bottom: 32px;
}
.tree .wrap {
  display: block;
  margin-bottom: 2px;
}
.tree .wrap svg {
  vertical-align: -3px;
}
.scroll-thumb {
  position: absolute;
  top: 12px;
  right: 2px;
  width: 2px;
  height: 836px;
  background: #85858a;
}
.cc-badge {
  position: absolute;
  right: 0;
  top: 702px;
  display: flex;
  gap: 8px;
  width: 159px;
  height: 68px;
  padding: 0 6px 0 4px;
  background: linear-gradient(#efefef 45px, #000 45px);
  color: #fff;
  font: 700 13px/22px "Liberation Sans", sans-serif;
}
.cc-badge .cc {
  width: 52px;
  height: 54px;
  margin-top: 8px;
}
.cc-term {
  display: flex;
  flex-direction: column;
  align-items: center;
  gap: 10px;
  width: 24px;
  padding-top: 10px;
}
.cc-term svg {
  width: 24px;
  height: 24px;
}

/* taskbar */
.taskbar {
  display: flex;
  align-items: center;
  height: 48px;
  flex: none;
  padding: 0 18px 0 20px;
  background: linear-gradient(to right, #1e5c41, #174f36 20%, #174f36 70%, #1f6239);
  color: #fff;
  font-family: "Noto Sans", sans-serif;
  font-size: 12px;
  line-height: 16px;
}
.start svg {
  width: 24px;
  height: 24px;
}
.win-search {
  display: flex;
  align-items: center;
  gap: 10px;
  width: 220px;
  height: 32px;
  margin: 0 4px 0 13px;
  padding: 0 8px 0 12px;
  background: #3c7158;
  border: 1px solid #4b7d65;
  border-radius: 16px;
}
.win-search input {
  flex: 1;
  min-width: 0;
  border: 0;
  padding: 0;
  background: none;
  font: 13px "Open Sans", sans-serif;
}
.win-search input::placeholder {
  color: #d5e2db;
}
.win-search .art {
  width: 38px;
  height: 24px;
}
.apps-row {
  display: flex;
  gap: 4px;
  flex: 1;
}
.apps-row button {
  position: relative;
  width: 40px;
  height: 40px;
}
.apps-row svg {
  width: 24px;
  height: 24px;
}
.apps-row .open::after {
  content: "";
  position: absolute;
  bottom: 0;
  left: 17px;
  width: 6px;
  height: 3px;
  border-radius: 2px;
  background: #93b3a2;
}
.apps-row .selected {
  background: #285d46;
  border-radius: 4px;
}
.apps-row .selected::after {
  left: 12px;
  width: 16px;
  background: #5ff5dc;
}
.badge {
  position: absolute;
  top: 2px;
  right: -3px;
  height: 16px;
  padding: 0 4px;
  border-radius: 8px;
  background: #5ff5dc;
  color: #10352a;
  font-size: 11px;
}
.weather {
  display: flex;
  align-items: center;
  gap: 4px;
  width: 157px;
}
.weather svg {
  width: 26px;
  height: 30px;
}
.weather p {
  margin: 0;
}
.weather span {
  color: #c3d6cc;
}
.five {
  font: 12px "Noto Sans", sans-serif;
}
.tray {
  display: flex;
  align-items: center;
  gap: 15px;
}
.tray svg {
  width: 18px;
  height: 18px;
}
.tray .mic {
  fill: none;
  stroke: #8fe8c4;
  stroke-width: 1.5;
}
.lang {
  margin: 0 3px 0 2px;
}
.net {
  display: flex;
  gap: 7px;
}
.tray time {
  text-align: right;
  margin-right: -8px;
}
.pointer {
  position: absolute;
  left: 505px;
  top: 799px;
  width: 12px;
  height: 20px;
}
```
